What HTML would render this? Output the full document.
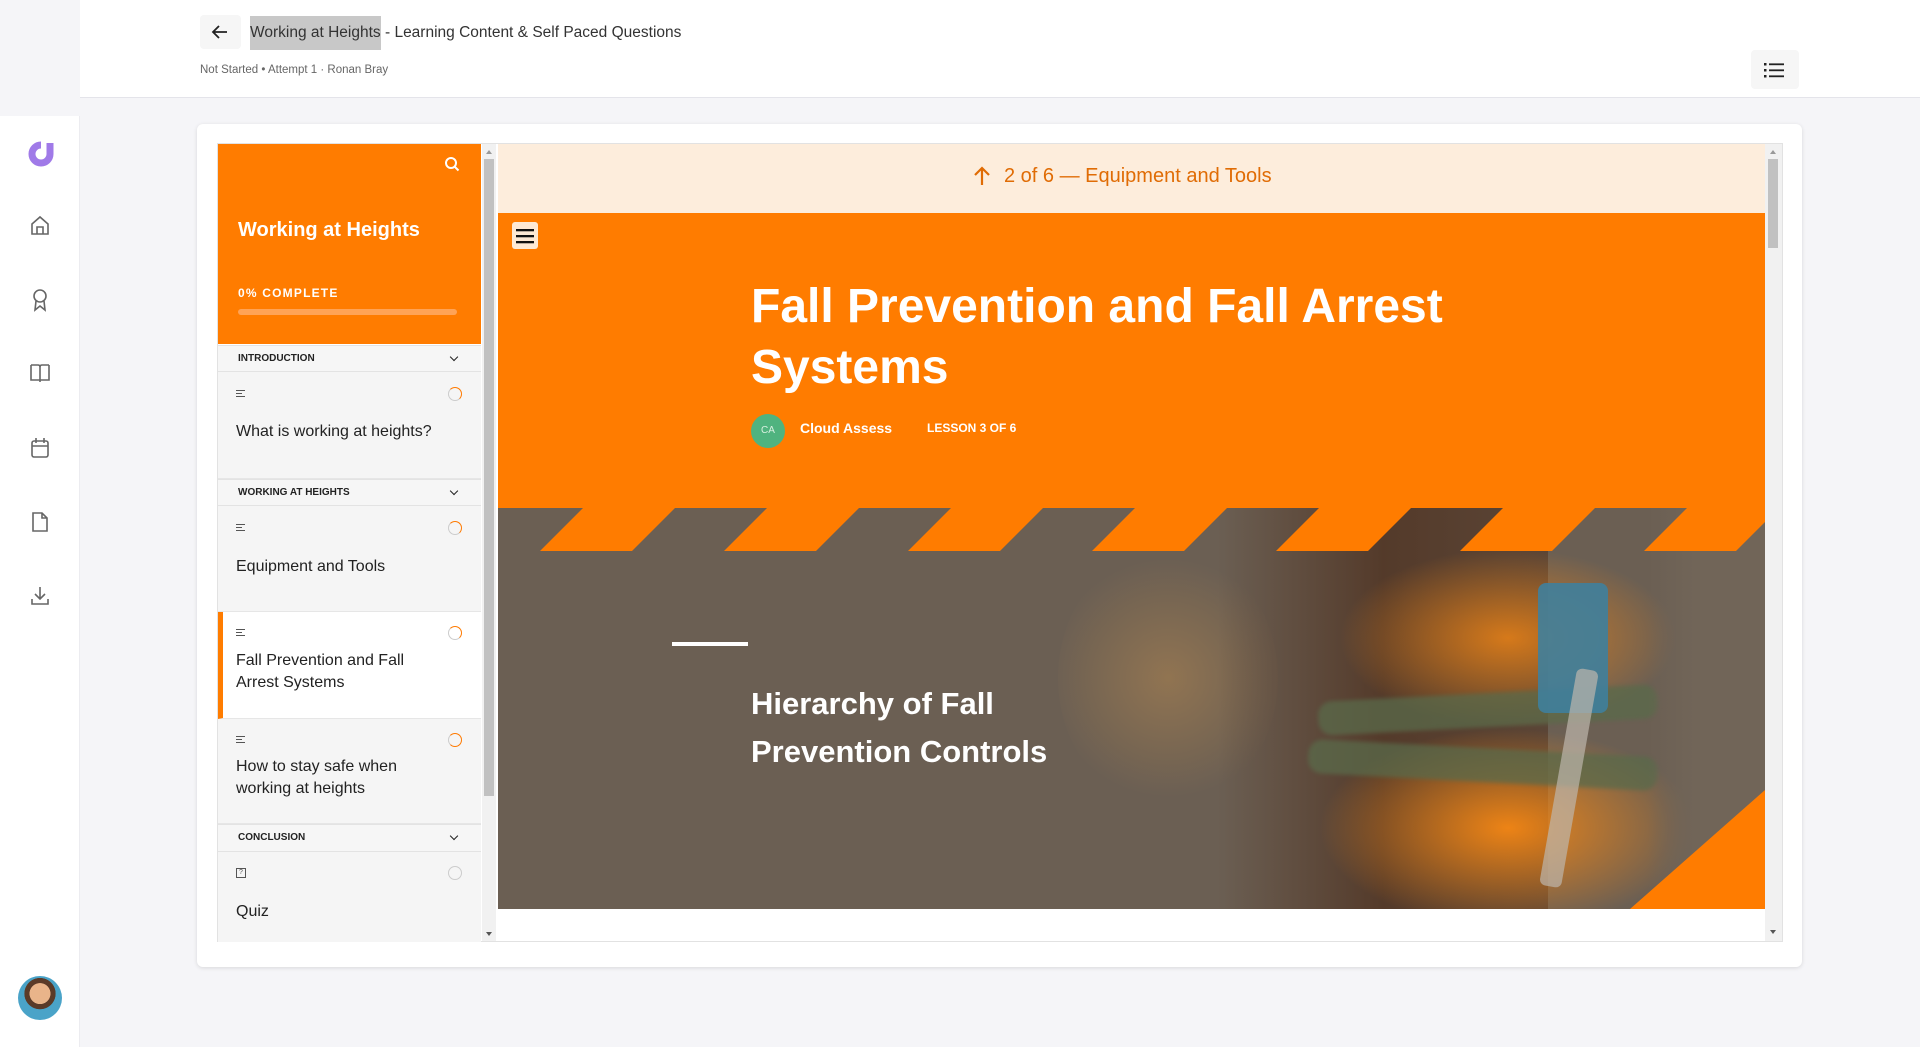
<!DOCTYPE html>
<html><head><meta charset="utf-8"><style>
*{margin:0;padding:0;box-sizing:border-box}
body{width:1920px;height:1047px;overflow:hidden;background:#f5f5f8;font-family:"Liberation Sans",sans-serif;position:relative}
.abs{position:absolute}
.nav{left:0;top:116px;width:80px;height:931px;background:#fff;border-right:1px solid #ececf0}
.hdr{left:80px;top:0;width:1840px;height:98px;background:#fff;border-bottom:1px solid #e4e4ea}
.ico{position:absolute;left:28px}
.card{left:197px;top:124px;width:1605px;height:843px;background:#fff;border-radius:6px;box-shadow:0 1px 4px rgba(0,0,0,.12)}
.frame{left:217px;top:143px;width:1566px;height:799px;border:1px solid #e2e2e2;background:#fff;overflow:hidden}
.sec{position:absolute;left:218px;width:263px;background:#f6f6f6;border-top:1px solid #e3e3e3;border-bottom:1px solid #e3e3e3;font-size:10px;font-weight:bold;color:#222;padding-left:20px;line-height:26px}
.sec:after{content:"";position:absolute;right:24px;top:8px;width:5px;height:5px;border-right:1.6px solid #222;border-bottom:1.6px solid #222;transform:rotate(45deg)}
.it{position:absolute;left:218px;width:263px;background:#f5f5f5;border-bottom:1px solid #e6e6e6}
.it .t{position:absolute;left:18px;font-size:16px;color:#222;line-height:22px}
.it .l{position:absolute;left:18px;width:9px;height:7px;border-top:1.3px solid #555;border-bottom:1.3px solid #555}
.it .l:after{content:"";position:absolute;left:0;top:1.5px;width:6px;height:1.3px;background:#555}
.it .c{position:absolute;left:230px;width:14px;height:14px;border-radius:50%;border:1.5px solid #ccc}
.it .c.o{border-top-color:#ff7a00;border-right-color:#ff7a00}
</style></head><body>
<div class="abs nav"></div>
<div class="abs hdr"></div>
<svg class="ico" style="top:140px" width="28" height="30" viewBox="0 0 28 30"><path d="M22 3 V14 A9 9 0 1 1 13 5" fill="none" stroke="#a07ae8" stroke-width="7"/></svg>
<svg class="ico" style="top:214px" width="24" height="24" viewBox="0 0 24 24" fill="none" stroke="#666" stroke-width="1.6"><path d="M4 10 L12 3 L20 10 V20 H4 Z M9 20 V13 H15 V20"/></svg>
<svg class="ico" style="top:287px" width="24" height="26" viewBox="0 0 24 26" fill="none" stroke="#666" stroke-width="1.6"><circle cx="12" cy="9" r="6"/><path d="M8 14 L7 23 L12 19 L17 23 L16 14"/></svg>
<svg class="ico" style="top:361px" width="24" height="24" viewBox="0 0 24 24" fill="none" stroke="#666" stroke-width="1.6"><path d="M3 4 H10 Q12 4 12 6 V21 M21 4 H14 Q12 4 12 6 M3 4 V19 H21 V4"/></svg>
<svg class="ico" style="top:436px" width="24" height="24" viewBox="0 0 24 24" fill="none" stroke="#666" stroke-width="1.6"><rect x="4" y="5" width="16" height="16" rx="2"/><path d="M4 10 H20 M8 2 V7 M16 2 V7"/></svg>
<svg class="ico" style="top:510px" width="24" height="24" viewBox="0 0 24 24" fill="none" stroke="#666" stroke-width="1.6"><path d="M5 3 H14 L19 8 V21 H5 Z M14 3 V8 H19"/></svg>
<svg class="ico" style="top:584px" width="24" height="24" viewBox="0 0 24 24" fill="none" stroke="#666" stroke-width="1.6"><path d="M12 3 V15 M7 10 L12 15 L17 10 M4 15 V20 H20 V15"/></svg>
<div class="abs" style="left:18px;top:976px;width:44px;height:44px;border-radius:50%;background:radial-gradient(circle at 50% 40%,#e9b48a 0 30%,#5a3a28 31% 45%,#4aa3c8 46%)"></div>
<div class="abs" style="left:200px;top:15px;width:41px;height:34px;background:#f6f6f6;border-radius:4px"></div>
<svg class="abs" style="left:210px;top:22px" width="20" height="20" viewBox="0 0 20 20" fill="none" stroke="#222" stroke-width="1.8"><path d="M17 10 H3 M9 4 L3 10 L9 16"/></svg>
<div class="abs" style="left:250px;top:16px;font-size:15.5px;color:#333;white-space:nowrap;line-height:34px"><span style="background:#c8c8c8;display:inline-block">Working at Heights</span> - Learning Content &amp; Self Paced Questions</div>
<div class="abs" style="left:200px;top:64px;font-size:11.5px;color:#666;white-space:nowrap">Not Started • Attempt 1 · Ronan Bray</div>
<div class="abs" style="left:1751px;top:50px;width:48px;height:39px;background:#f6f6f6;border-radius:4px"></div>
<svg class="abs" style="left:1764px;top:62px" width="22" height="16" viewBox="0 0 22 16" fill="#222"><rect x="0" y="1" width="2.5" height="2.5"/><rect x="0" y="7" width="2.5" height="2.5"/><rect x="0" y="13" width="2.5" height="2.5"/><rect x="5" y="1.4" width="15" height="1.8"/><rect x="5" y="7.4" width="15" height="1.8"/><rect x="5" y="13.4" width="15" height="1.8"/></svg>
<div class="abs card"></div>
<div class="abs frame"></div>
<div class="abs" style="left:218px;top:144px;width:263px;height:200px;background:#ff7c00"></div>
<svg class="abs" style="left:444px;top:156px" width="16" height="16" viewBox="0 0 16 16" fill="none" stroke="#fff" stroke-width="2"><circle cx="7" cy="7" r="5"/><path d="M11 11 L14.5 14.5"/></svg>
<div class="abs" style="left:238px;top:219px;font-size:20px;font-weight:bold;color:#fff">Working at Heights</div>
<div class="abs" style="left:238px;top:286px;font-size:12px;font-weight:bold;color:#fff;letter-spacing:1.2px">0% COMPLETE</div>
<div class="abs" style="left:238px;top:309px;width:219px;height:6px;border-radius:3px;background:#ffa356"></div>
<div class="abs" style="left:482px;top:144px;width:14px;height:797px;background:#f1f1f1"></div>
<div class="abs" style="left:484px;top:159px;width:10px;height:637px;background:#c1c1c1"></div>
<div class="abs" style="left:486px;top:150px;width:0;height:0;border:3px solid transparent;border-bottom:4px solid #999;border-top:0"></div>
<div class="abs" style="left:486px;top:932px;width:0;height:0;border:3px solid transparent;border-top:4px solid #555;border-bottom:0"></div>
<div class="sec" style="top:345px;height:27px">INTRODUCTION</div>
<div class="it" style="top:372px;height:107px"><div class="l" style="top:18px"></div><div class="c o" style="top:15px"></div><div class="t" style="top:49px">What is working at heights?</div></div>
<div class="sec" style="top:479px;height:27px">WORKING AT HEIGHTS</div>
<div class="it" style="top:506px;height:106px"><div class="l" style="top:18px"></div><div class="c o" style="top:15px"></div><div class="t" style="top:50px">Equipment and Tools</div></div>
<div class="it" style="top:612px;height:107px;background:#fff;border-left:5px solid #ff7c00"><div class="l" style="top:17px;left:13px"></div><div class="c o" style="top:14px;left:225px"></div><div class="t" style="top:38px;left:13px">Fall Prevention and Fall<br>Arrest Systems</div></div>
<div class="it" style="top:719px;height:105px"><div class="l" style="top:17px"></div><div class="c o" style="top:14px;border-right-color:#ff7a00;border-bottom-color:#ff7a00"></div><div class="t" style="top:37px">How to stay safe when<br>working at heights</div></div>
<div class="sec" style="top:824px;height:28px">CONCLUSION</div>
<div class="it" style="top:852px;height:90px;border:0"><div style="position:absolute;left:18px;top:16px;width:10px;height:10px;border:1.2px solid #555;font-size:7px;line-height:8px;text-align:center;color:#555">?</div><div class="c" style="top:14px"></div><div class="t" style="top:49px">Quiz</div></div>
<div class="abs" style="left:498px;top:144px;width:1267px;height:69px;background:#fdeddc"></div>
<svg class="abs" style="left:972px;top:165px" width="20" height="22" viewBox="0 0 20 22" fill="none" stroke="#e06c05" stroke-width="2.2"><path d="M10 20 V3 M3 10 L10 3 L17 10"/></svg>
<div class="abs" style="left:1004px;top:165px;font-size:20px;color:#e06c05;white-space:nowrap">2 of 6 — Equipment and Tools</div>
<div class="abs" style="left:498px;top:213px;width:1267px;height:296px;background:#ff7c00"></div>
<div class="abs" style="left:512px;top:222px;width:26px;height:27px;background:#fde9d5;border-radius:3px"></div>
<svg class="abs" style="left:515px;top:226px" width="20" height="20" viewBox="0 0 20 20" fill="#111"><rect x="1" y="3" width="18" height="2.3"/><rect x="1" y="9" width="18" height="2.3"/><rect x="1" y="15" width="18" height="2.3"/></svg>
<div class="abs" style="left:751px;top:276px;font-size:48px;font-weight:bold;color:#fff;line-height:61px;white-space:nowrap">Fall Prevention and Fall Arrest<br>Systems</div>
<div class="abs" style="left:751px;top:414px;width:34px;height:34px;border-radius:50%;background:#4fb37f;color:#d8f0e0;font-size:10px;text-align:center;line-height:34px">CA</div>
<div class="abs" style="left:800px;top:420px;font-size:14px;font-weight:bold;color:#fff">Cloud Assess</div>
<div class="abs" style="left:927px;top:421px;font-size:12px;font-weight:bold;color:#fff">LESSON 3 OF 6</div>
<div class="abs" style="left:498px;top:508px;width:1267px;height:401px;overflow:hidden;background:#6b5f53">
  <div class="abs" style="left:560px;top:40px;width:220px;height:260px;border-radius:50%;background:radial-gradient(circle,rgba(170,130,80,.6) 0,rgba(170,130,80,0) 70%)"></div>
  <div class="abs" style="left:720px;top:0;width:330px;height:401px;background:linear-gradient(90deg,rgba(80,52,35,0),rgba(80,52,35,.85) 50%,rgba(80,52,35,.6));"></div>
  <div class="abs" style="left:820px;top:220px;width:380px;height:200px;background:radial-gradient(ellipse,rgba(245,135,20,.95) 0,rgba(245,135,20,0) 70%)"></div>
  <div class="abs" style="left:840px;top:40px;width:340px;height:180px;background:radial-gradient(ellipse,rgba(245,135,20,.8) 0,rgba(245,135,20,0) 70%)"></div>
  <div class="abs" style="left:820px;top:185px;width:340px;height:34px;background:#5a6a4a;transform:rotate(-3deg);opacity:.75;border-radius:14px;filter:blur(2px)"></div>
  <div class="abs" style="left:810px;top:240px;width:350px;height:34px;background:#5a6a4a;transform:rotate(3deg);opacity:.75;border-radius:14px;filter:blur(2px)"></div>
  <div class="abs" style="left:1040px;top:75px;width:70px;height:130px;background:#3f7f9c;border-radius:8px;opacity:.9"></div>
  <div class="abs" style="left:1060px;top:160px;width:22px;height:220px;background:#bdb6ad;transform:rotate(10deg);opacity:.7;border-radius:6px"></div>
  <div class="abs" style="left:1150px;top:0;width:117px;height:401px;background:linear-gradient(90deg,rgba(113,101,88,0),#716558 40%)"></div>
  <div class="abs" style="left:174px;top:134px;width:76px;height:4px;background:#fff"></div>
</div>
<svg class="abs" style="left:498px;top:508px" width="1267" height="401" viewBox="0 0 1267 401" fill="#ff7c00">
  <path d="M42 43 L134 43 L177 0 L85 0 Z M226 43 L318 43 L361 0 L269 0 Z M410 43 L502 43 L545 0 L453 0 Z M594 43 L686 43 L729 0 L637 0 Z M778 43 L870 43 L913 0 L821 0 Z M962 43 L1054 43 L1097 0 L1005 0 Z M1146 43 L1238 43 L1281 0 L1189 0 Z"/>
  <path d="M1267 282 L1267 401 L1132 401 Z"/>
</svg>
<div class="abs" style="left:751px;top:680px;font-size:31px;font-weight:bold;color:#fff;line-height:48px">Hierarchy of Fall<br>Prevention Controls</div>
<div class="abs" style="left:1765px;top:144px;width:17px;height:797px;background:#f1f1f1"></div>
<div class="abs" style="left:1768px;top:159px;width:10px;height:89px;background:#c1c1c1"></div>
<div class="abs" style="left:1770px;top:150px;width:0;height:0;border:3px solid transparent;border-bottom:4px solid #999;border-top:0"></div>
<div class="abs" style="left:1770px;top:930px;width:0;height:0;border:3px solid transparent;border-top:4px solid #555;border-bottom:0"></div>
</body></html>
